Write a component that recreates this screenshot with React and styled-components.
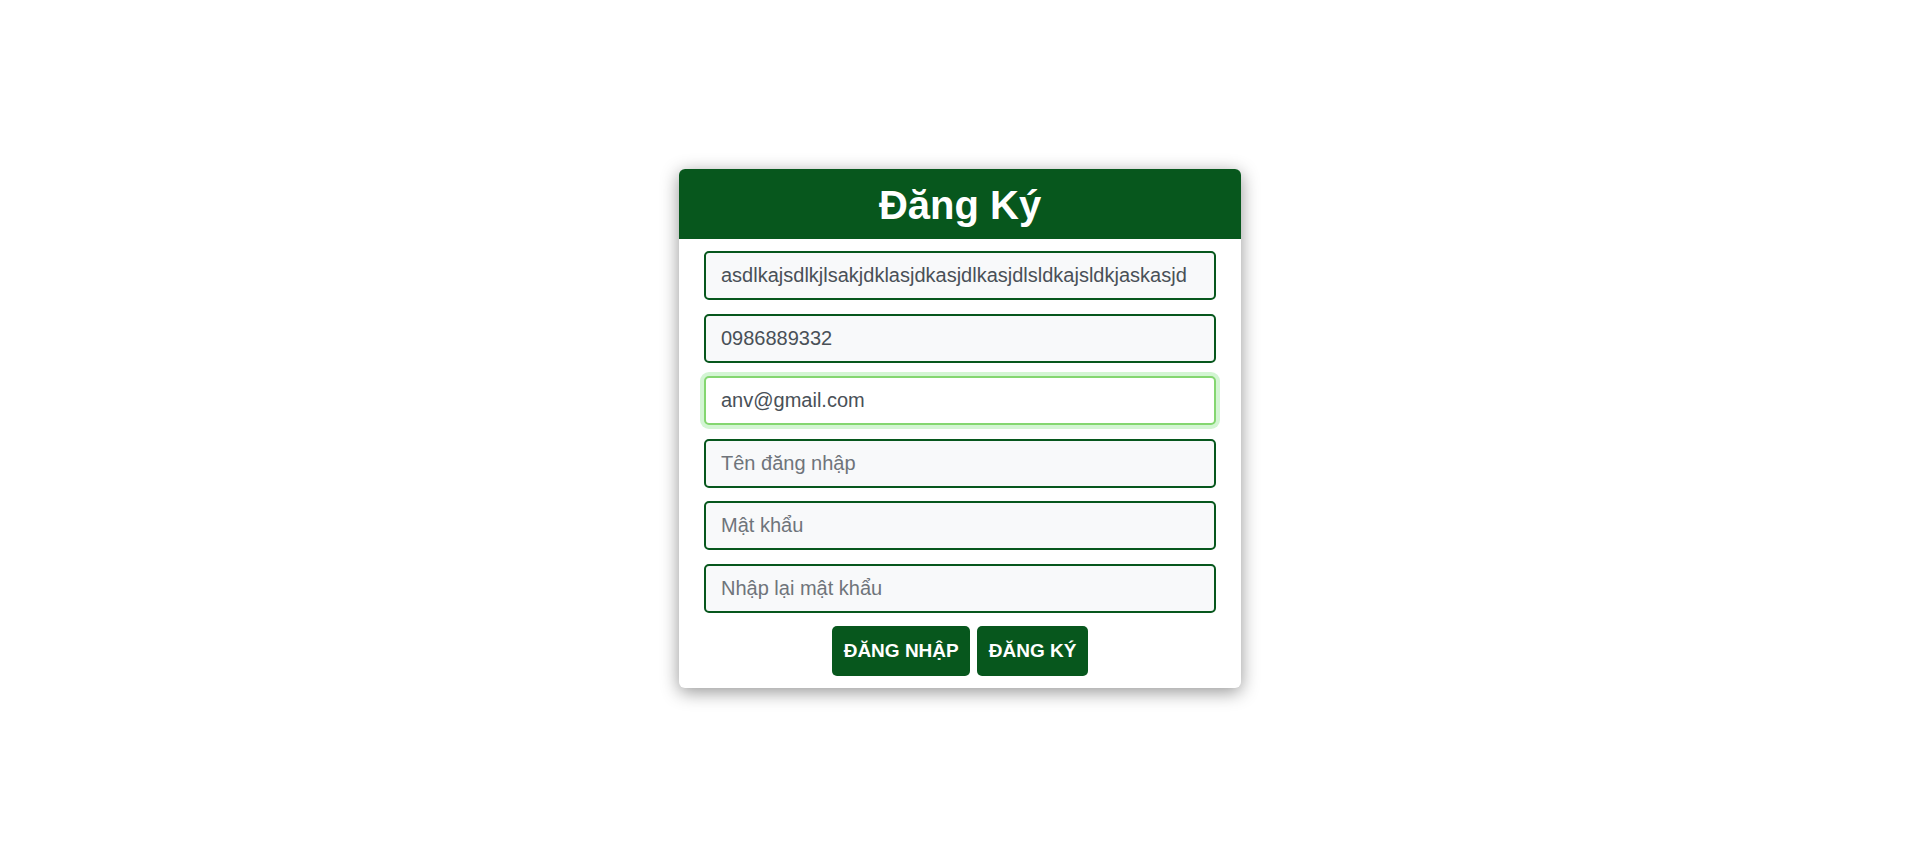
import React, { useEffect, useRef } from "react";
import styled, { createGlobalStyle } from "styled-components";

const GlobalStyle = createGlobalStyle`
  * { box-sizing: border-box; }
  html, body { margin: 0; padding: 0; background: #ffffff; }
  body { font-family: "Liberation Sans", Arial, sans-serif; }
`;

const Page = styled.div`
  min-height: 857px;
  display: flex;
  align-items: center;
  justify-content: center;
`;

const Card = styled.div`
  width: 562px;
  background: #ffffff;
  border-radius: 6px;
  overflow: hidden;
  box-shadow: 0 4px 18px rgba(0, 0, 0, 0.42);
`;

const Header = styled.div`
  height: 70px;
  background: #07571d;
  display: flex;
  align-items: center;
  justify-content: center;
`;

const Title = styled.h1`
  margin: 0;
  color: #ffffff;
  font-size: 40px;
  font-weight: 700;
  line-height: 70px;
  padding-top: 2px;
`;

const Form = styled.form`
  display: flex;
  flex-direction: column;
  gap: 13.5px;
  padding: 12px 25px;
`;

const Field = styled.input`
  width: 100%;
  height: 49px;
  padding: 0 15px;
  font-family: "Liberation Sans", Arial, sans-serif;
  font-size: 20px;
  color: #495057;
  background: ${(p) => (p.$focused ? "#ffffff" : "#f8f9fa")};
  border: 2px solid ${(p) => (p.$focused ? "#84d670" : "#07571d")};
  border-radius: 5px;
  outline: none;
  box-shadow: ${(p) => (p.$focused ? "0 0 0 4px #d3f5d3" : "none")};
  caret-color: #222;

  &::placeholder {
    color: #6f747a;
  }
`;

const Actions = styled.div`
  display: flex;
  justify-content: center;
  gap: 7px;
`;

const Button = styled.button`
  height: 49.5px;
  padding: 0 11.5px;
  border: none;
  border-radius: 5px;
  background: #07571d;
  color: #ffffff;
  font-family: "Liberation Sans", Arial, sans-serif;
  font-size: 19px;
  font-weight: 700;
  cursor: pointer;
`;

export default function App() {
  const emailRef = useRef(null);

  useEffect(() => {
    const el = emailRef.current;
    if (el) {
      el.focus();
      el.setSelectionRange(el.value.length, el.value.length);
    }
  }, []);

  return (
    <>
      <GlobalStyle />
      <Page>
        <Card>
          <Header>
            <Title>Đăng Ký</Title>
          </Header>
          <Form onSubmit={(e) => e.preventDefault()}>
            <Field
              defaultValue="asdlkajsdlkjlsakjdklasjdkasjdlkasjdlsldkajsldkjaskasjd"
              placeholder="Họ và tên"
            />
            <Field defaultValue="0986889332" placeholder="Số điện thoại" />
            <Field
              ref={emailRef}
              $focused
              defaultValue="anv@gmail.com"
              placeholder="Email"
            />
            <Field placeholder="Tên đăng nhập" />
            <Field type="password" placeholder="Mật khẩu" />
            <Field type="password" placeholder="Nhập lại mật khẩu" />
            <Actions>
              <Button type="button">ĐĂNG NHẬP</Button>
              <Button type="submit">ĐĂNG KÝ</Button>
            </Actions>
          </Form>
        </Card>
      </Page>
    </>
  );
}
